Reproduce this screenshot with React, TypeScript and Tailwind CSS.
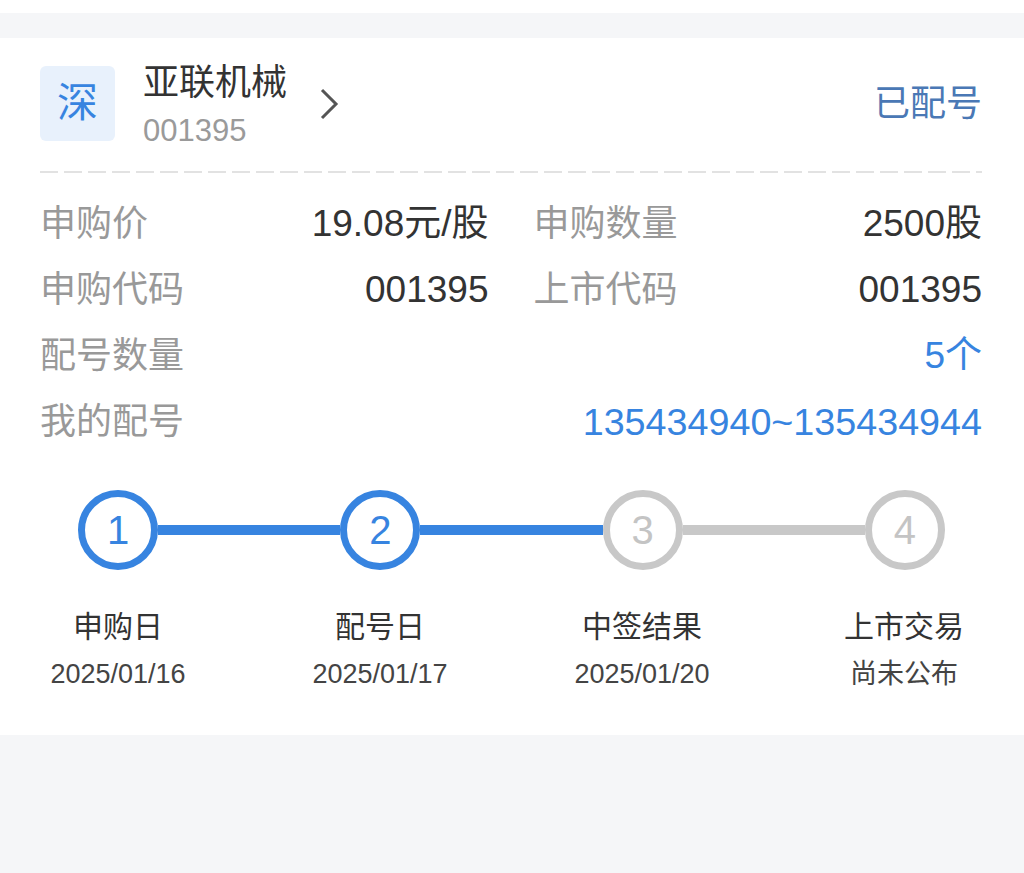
import React from "react";

const font = "font-['Liberation_Sans','Noto_Sans_CJK_SC',sans-serif]";

interface Step {
    no: number;
    title: string;
    date: string;
    done: boolean;
}

const steps: Step[] = [
    { no: 1, title: "申购日", date: "2025/01/16", done: true },
    { no: 2, title: "配号日", date: "2025/01/17", done: true },
    { no: 3, title: "中签结果", date: "2025/01/20", done: false },
    { no: 4, title: "上市交易", date: "尚未公布", done: false },
];

function Circle({ step }: { step: Step }) {
    return (
        <div
            className={
                step.done
                    ? "w-20 h-20 shrink-0 rounded-full border-[7px] border-[#3784e0] bg-white flex items-center justify-center text-[40px] text-[#3784e0]"
                    : "w-20 h-20 shrink-0 rounded-full border-[7px] border-[#c8c8c8] bg-white flex items-center justify-center text-[40px] text-[#c4c4c4]"
            }
        >
            {step.no}
        </div>
    );
}

function Line({ done }: { done: boolean }) {
    return <div className={done ? "flex-1 h-[10px] bg-[#3784e0]" : "flex-1 h-[10px] bg-[#c8c8c8]"} />;
}

export default function App() {
    return (
        <div className={`min-h-screen bg-[#f5f6f8] ${font}`}>
            <div className="h-[13px] bg-white" />
            <div className="h-[25px]" />
            <div className="bg-white pl-10 pr-[42px] pt-[28px] pb-[43px]">
                {/* header */}
                <div className="h-[75px] flex items-center">
                    <div className="w-[75px] h-[75px] shrink-0 rounded-[6px] bg-[#e8f1fc] flex items-center justify-center text-[41px] text-[#3784e0]">
                        深
                    </div>
                    <div className="ml-[28px] mt-[5px] flex flex-col">
                        <span className="text-[36px] leading-[44px] text-[#333]">亚联机械</span>
                        <span className="mt-[6px] text-[31px] leading-[40px] text-[#9a9a9a]">001395</span>
                    </div>
                    <svg className="ml-[33px]" width="19" height="32" viewBox="0 0 19 32">
                        <polyline points="2,2 16,16 2,30" fill="none" stroke="#555" strokeWidth="3" />
                    </svg>
                    <span className="ml-auto text-[36px] leading-[44px] text-[#4a78b5]">已配号</span>
                </div>

                <div className="mt-[30px] h-[2px] bg-[linear-gradient(to_right,#e2e2e2_18px,transparent_18px)] bg-[length:24px_2px] bg-repeat-x" />

                {/* info rows */}
                <div className="mt-[18px] grid grid-cols-2 gap-x-[45px]">
                    <div className="h-[66px] flex items-center justify-between">
                        <span className="text-[36px] text-[#999]">申购价</span>
                        <span className="text-[37px] text-[#333]">19.08元/股</span>
                    </div>
                    <div className="h-[66px] flex items-center justify-between">
                        <span className="text-[36px] text-[#999]">申购数量</span>
                        <span className="text-[37px] text-[#333]">2500股</span>
                    </div>
                    <div className="h-[66px] flex items-center justify-between">
                        <span className="text-[36px] text-[#999]">申购代码</span>
                        <span className="text-[37px] text-[#333]">001395</span>
                    </div>
                    <div className="h-[66px] flex items-center justify-between">
                        <span className="text-[36px] text-[#999]">上市代码</span>
                        <span className="text-[37px] text-[#333]">001395</span>
                    </div>
                </div>
                <div className="h-[66px] flex items-center justify-between">
                    <span className="text-[36px] text-[#999]">配号数量</span>
                    <span className="text-[37px] text-[#3784e0]">5个</span>
                </div>
                <div className="h-[66px] flex items-center justify-between">
                    <span className="text-[36px] text-[#999]">我的配号</span>
                    <span className="text-[37.7px] text-[#3784e0]">135434940~135434944</span>
                </div>

                {/* steps */}
                <div className="mt-[35px] flex items-center pl-[38px] pr-[37px]">
                    <Circle step={steps[0]} />
                    <Line done />
                    <Circle step={steps[1]} />
                    <Line done />
                    <Circle step={steps[2]} />
                    <Line done={false} />
                    <Circle step={steps[3]} />
                </div>
                <div className="mt-[37px] flex justify-between">
                    {steps.map((s) => (
                        <div key={s.no} className="w-[156px] flex flex-col items-center">
                            <span className="text-[30px] leading-[40px] text-[#333]">{s.title}</span>
                            <span className="mt-[9px] text-[27px] leading-[36px] text-[#444]">{s.date}</span>
                        </div>
                    ))}
                </div>
            </div>
        </div>
    );
}
